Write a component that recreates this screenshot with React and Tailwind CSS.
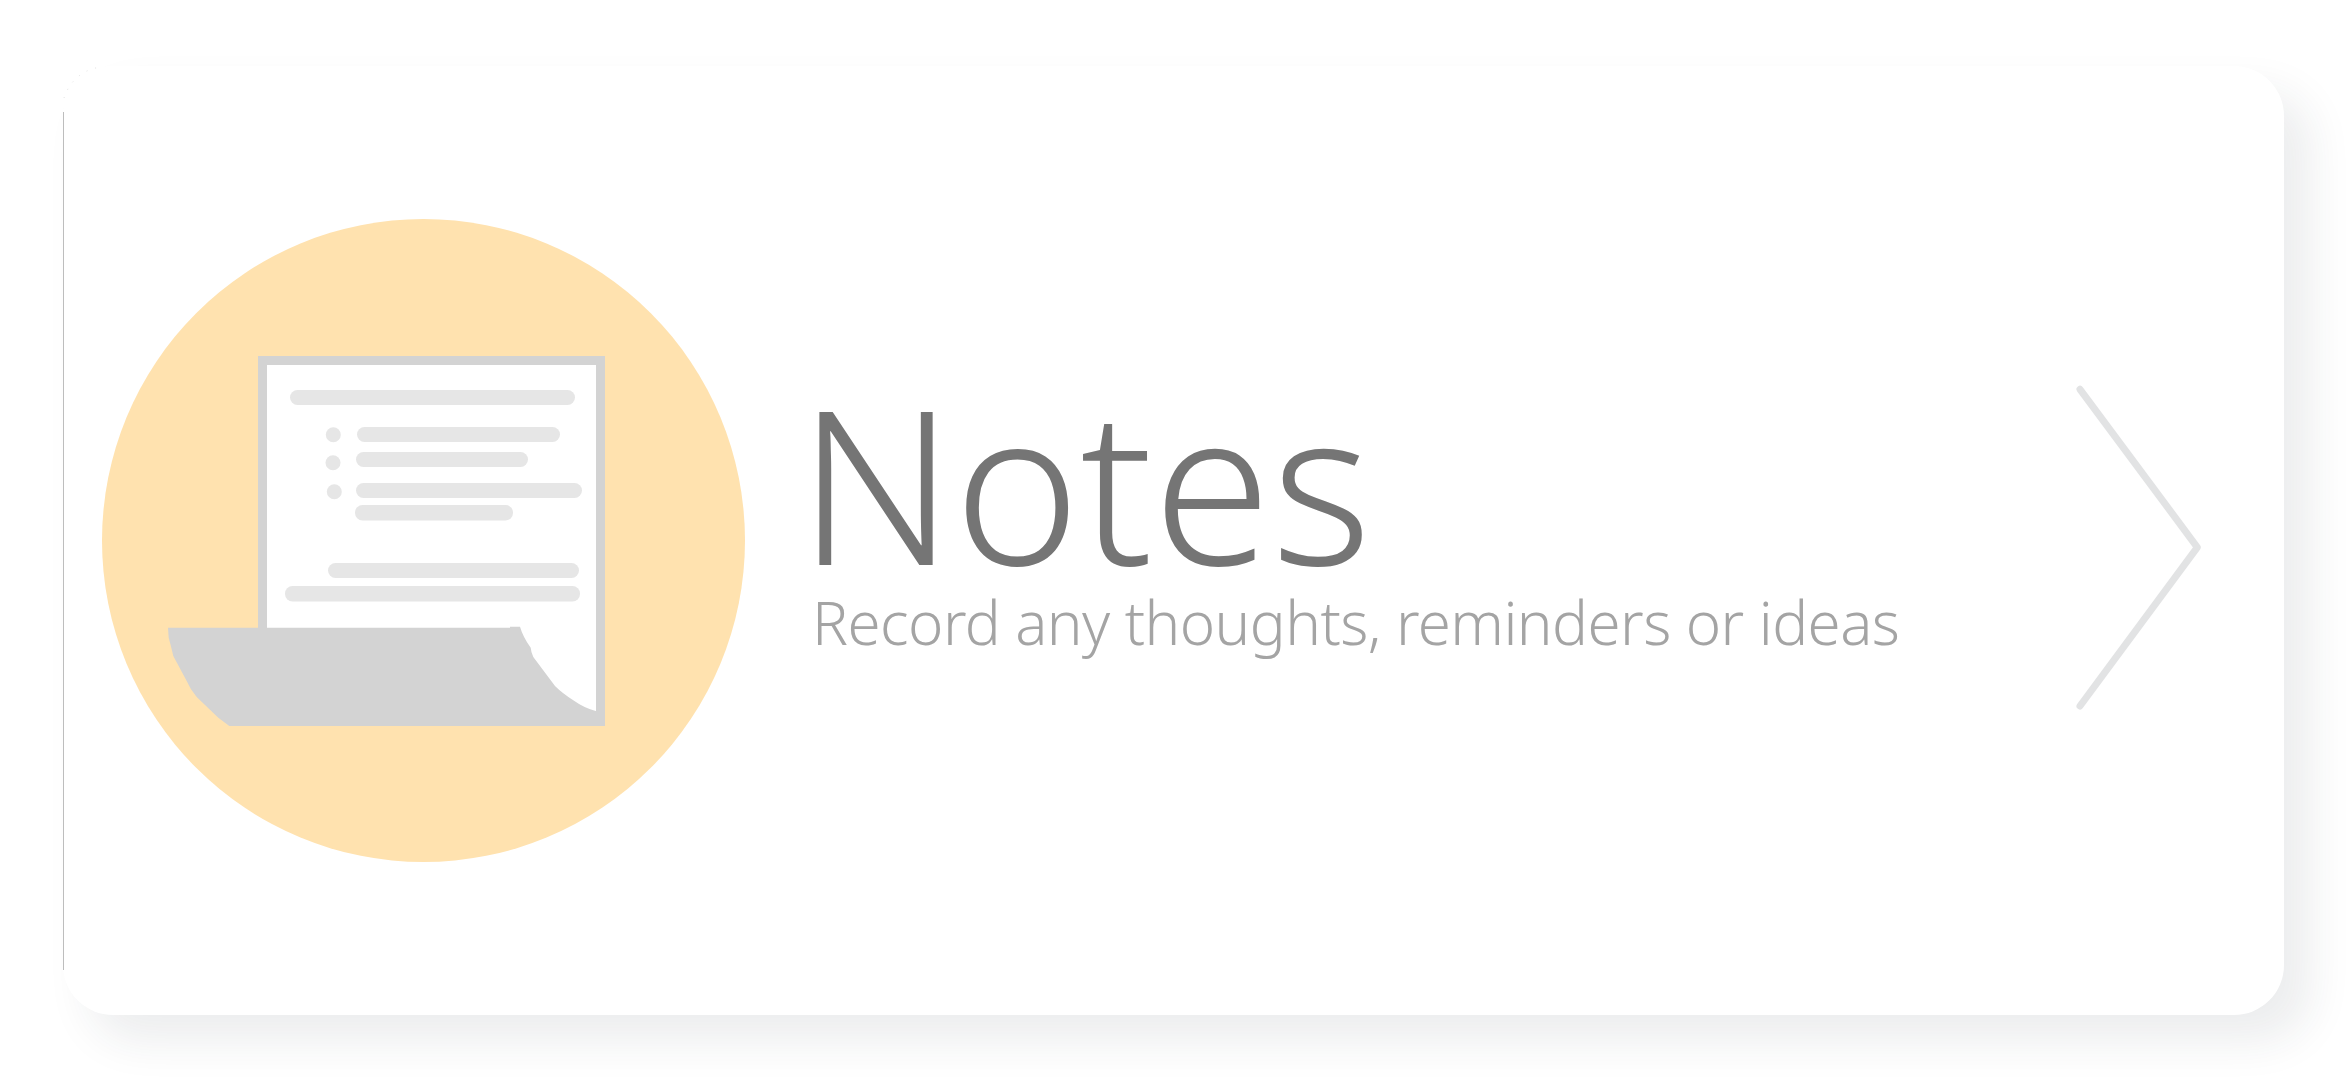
export default function App() {
  return (
    <div className="w-[2348px] h-[1080px] bg-white pl-[63px] pt-[66px] overflow-hidden">
      <div className="relative w-[2221px] h-[949px] rounded-[50px] bg-white shadow-[26px_26px_44px_rgba(40,50,60,0.085)] flex items-center">
        {/* faint arc left over in the top left corner */}
        <svg className="absolute left-0 top-0" width="42" height="34" viewBox="0 0 42 34">
          <path d="M1 32 C6 16 20 2 40 1" fill="none" stroke="#e4e4e4" strokeWidth="1" strokeDasharray="1 8" />
        </svg>
        <div className="w-px h-[858px] shrink-0 bg-[#bdbdbd]" />

        <div className="ml-[38px] w-[643px] h-[643px] shrink-0 rounded-full bg-[#ffe2af] flex items-center pl-[66px]">
          <svg width="437" height="370" viewBox="168 355 437 370">
            <rect x="258" y="355" width="347" height="370" fill="#d3d3d3" />
            <rect x="267" y="364" width="329" height="346" fill="#fff" />
            <g fill="#e6e6e6">
              <rect x="290" y="389" width="285" height="15" rx="7.5" />
              <circle cx="333.3" cy="433.7" r="7.5" />
              <rect x="357" y="426" width="203" height="15" rx="7.5" />
              <circle cx="333" cy="461.7" r="7.5" />
              <rect x="356" y="451" width="172" height="15" rx="7.5" />
              <circle cx="334.3" cy="490.7" r="7.5" />
              <rect x="356" y="482" width="226" height="15" rx="7.5" />
              <rect x="355" y="504" width="158" height="15.5" rx="7.5" />
              <rect x="328" y="562" width="251" height="15" rx="7.5" />
              <rect x="285" y="585" width="295" height="15.5" rx="7.5" />
            </g>
            <path
              d="M168 626.7 L510 626.7 L510 625.7 L520 625.7 Q523 636 530.7 646.7 Q531 651 533.3 656 L555 685 Q562 692 573.3 699.3 Q584 707 595.7 710 L605 710 L605 725 L229.3 725 L218.3 716.7 L196.7 696 Q190 688 186.7 680 L173.3 655 Q171 645 168.7 636.7 Z"
              fill="#d3d3d3"
            />
          </svg>
        </div>

        <div className="ml-[67px] mb-[54px] flex flex-col font-['Noto_Sans'] font-light whitespace-nowrap">
          <div className="-ml-[14px] text-[214px] leading-[212px] text-[#757575]">Notes</div>
          <div className="mt-[4px] text-[60px] leading-[60px] tracking-[-0.55px] text-[#a4a4a4]">Record any thoughts, reminders or ideas</div>
        </div>

        <svg className="ml-auto mr-[81px] mt-[14px] shrink-0" width="128" height="327" viewBox="2075 384 128 327">
          <path d="M2080 389.3 L2197.3 547.3 L2080 706" fill="none" stroke="#e2e3e4" strokeWidth="7" strokeLinecap="round" strokeLinejoin="round" />
        </svg>
      </div>
    </div>
  );
}
